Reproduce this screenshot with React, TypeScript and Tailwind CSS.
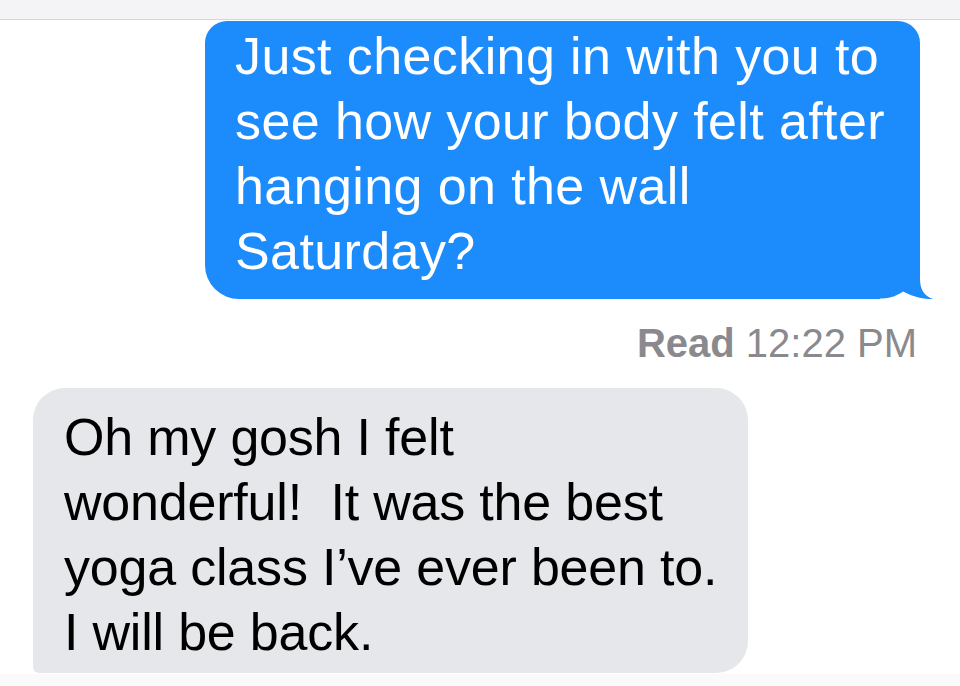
const font = { fontFamily: '"Liberation Sans", Arial, sans-serif' };

function Tail() {
  return (
    <svg
      className="absolute right-[-15px] bottom-0"
      width="55"
      height="30"
      viewBox="0 0 55 30"
    >
      <rect x="0" y="0" width="55" height="30" fill="#ffffff" />
      <path
        d="M0 0 H40 V10 C40 20 44 27 53 30 C45 30.5 33 28 23 22.5 C18 26 12 29 2 29.5 H0 Z"
        fill="#1c8bfc"
      />
    </svg>
  );
}

export default function App() {
  return (
    <div className="w-[960px] h-[686px] bg-white overflow-hidden flex flex-col" style={font}>
      {/* top bar */}
      <div className="h-[20px] shrink-0 bg-[#f4f4f6] border-b border-[#d6d6d8]" />

      {/* outgoing */}
      <div className="relative mt-[1px] ml-[205px] w-[715px] h-[278px] bg-[#1c8bfc] rounded-t-[22px] rounded-bl-[34px] pl-[30px] pt-[3px]">
        <p className="text-white text-[52px] leading-[65px] tracking-[0.4px]">
          Just checking in with you to
          <br />
          see how your body felt after
          <br />
          hanging on the wall
          <br />
          Saturday?
        </p>
        <Tail />
      </div>

      {/* read receipt */}
      <div className="mt-[20px] pr-[43px] flex justify-end text-[40px] leading-[48px] text-[#8a8a8e]">
        <span className="font-semibold">Read</span>
        <span className="ml-[11px]">12:22 PM</span>
      </div>

      {/* incoming */}
      <div className="mt-[21px] ml-[33px] w-[715px] h-[285px] bg-[#e6e7ea] rounded-t-[32px] rounded-br-[32px] rounded-bl-[6px] pl-[31px] pt-[17px]">
        <p className="text-black text-[52px] leading-[65px] tracking-[-0.2px]">
          Oh my gosh I felt
          <br />
          wonderful!&nbsp; It was the best
          <br />
          yoga class I’ve ever been to.
          <br />I will be back.
        </p>
      </div>
      <div className="flex-1 mt-[1px] bg-[#fafafa]" />
    </div>
  );
}
